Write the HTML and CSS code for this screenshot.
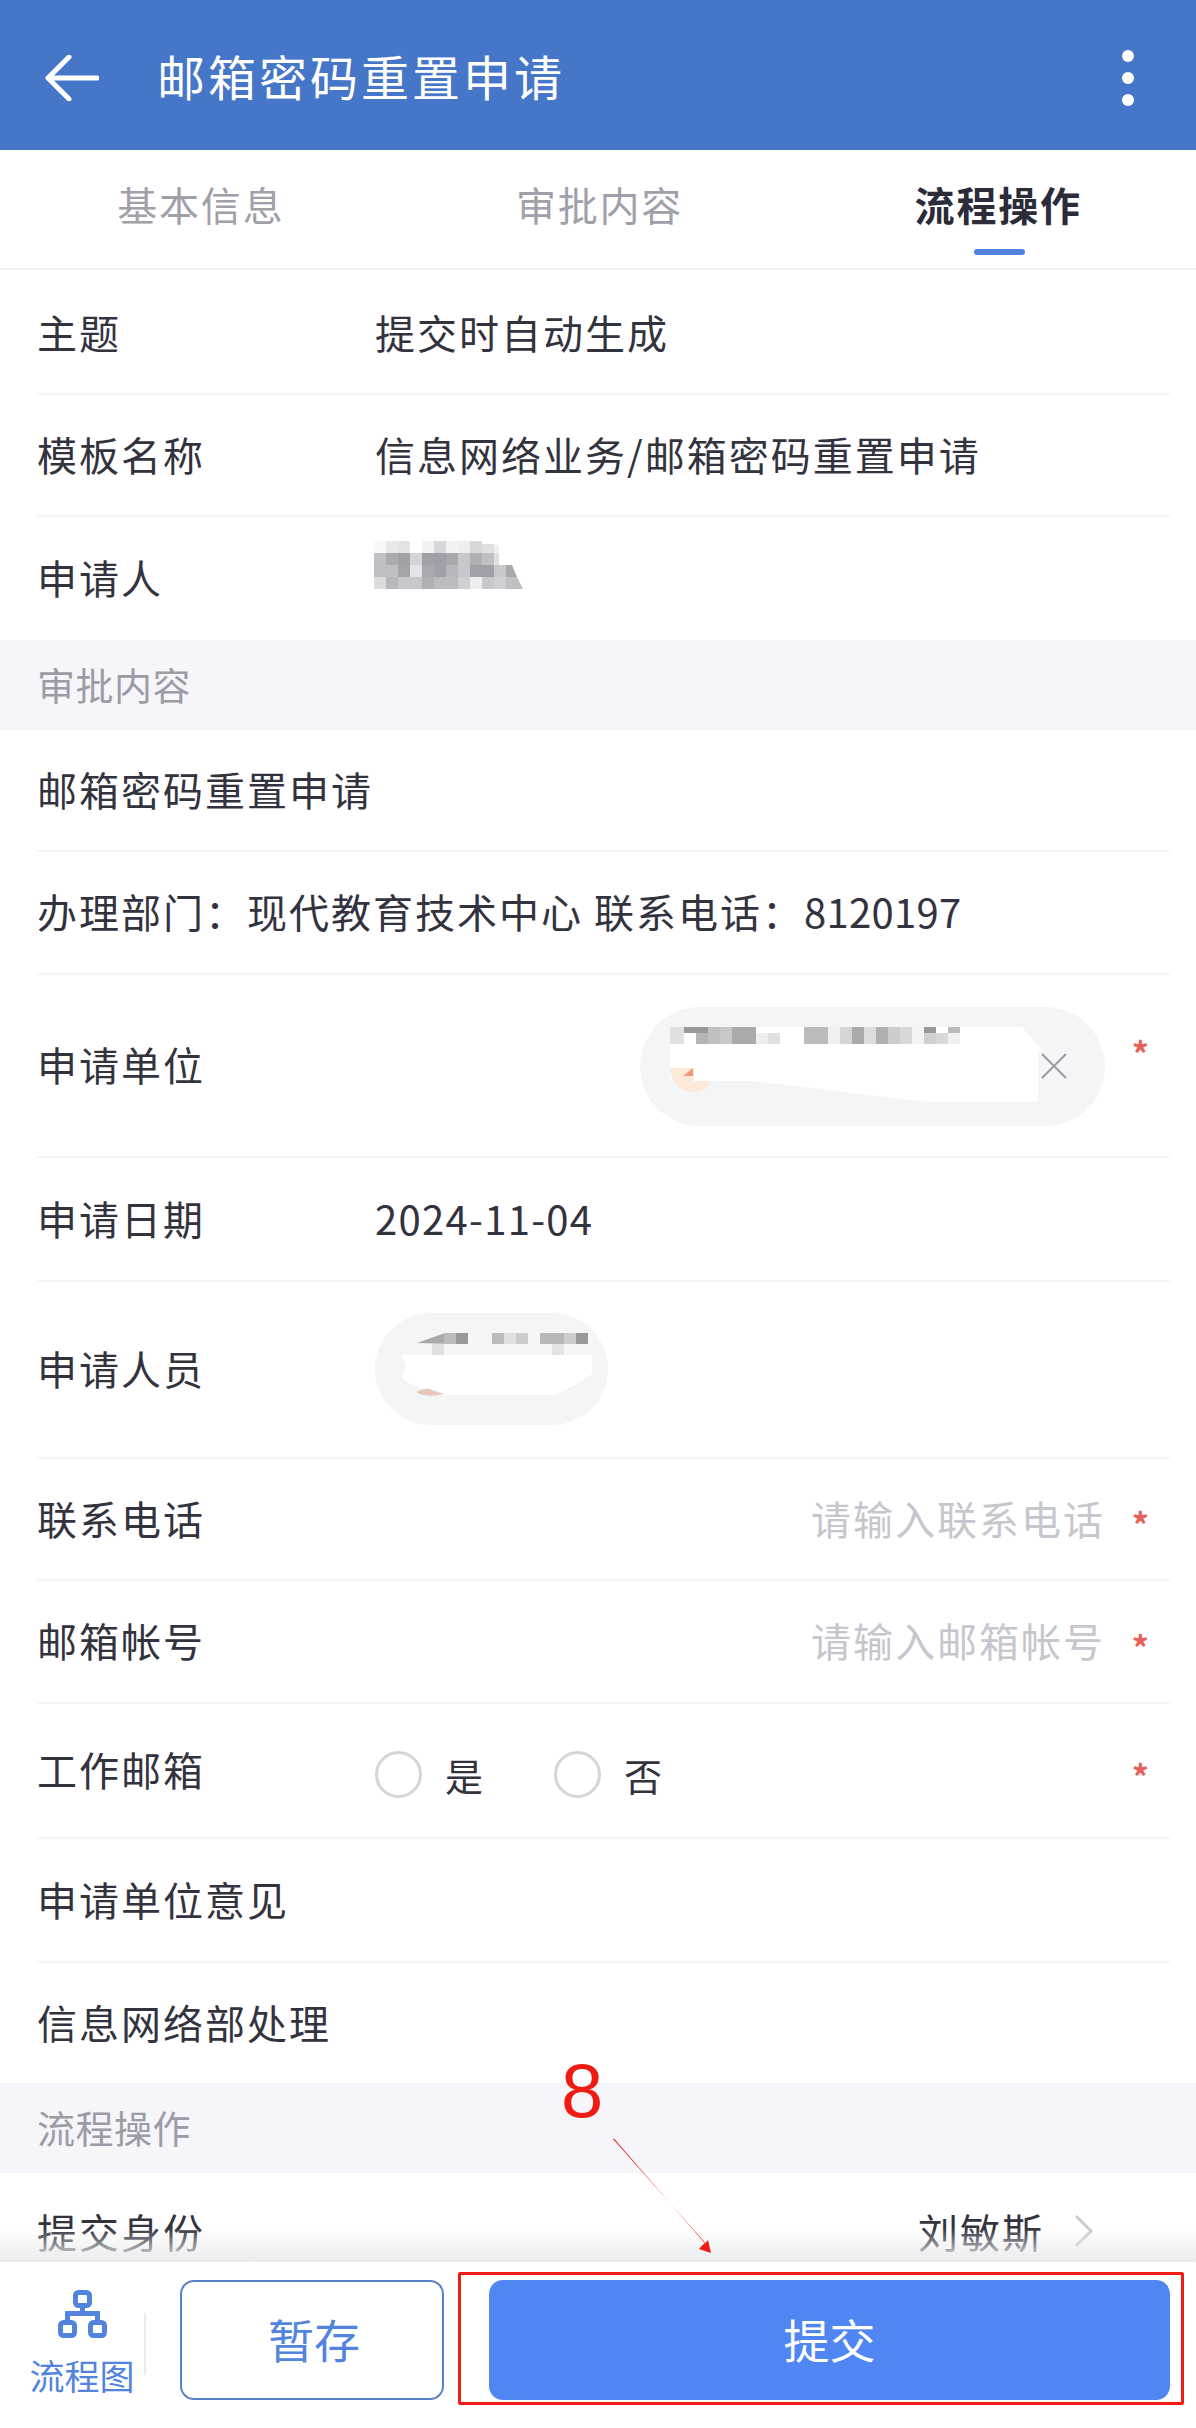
FILE: index.html
```html
<!DOCTYPE html>
<html lang="zh-CN">
<head>
<meta charset="utf-8">
<title>邮箱密码重置申请</title>
<link rel="stylesheet" href="styles.css">
</head>
<body>
<div class="app">
  <header class="topbar">
    <svg class="back" viewBox="0 0 54 46"><path d="M24 2 3 23l21 21M3 23h49" fill="none" stroke="#fff" stroke-width="5" stroke-linecap="round" stroke-linejoin="round"/></svg>
    <h1 class="title">邮箱密码重置申请</h1>
    <div class="dots"><i></i><i></i><i></i></div>
  </header>
  <nav class="tabs">
    <div class="tab">基本信息</div>
    <div class="tab">审批内容</div>
    <div class="tab active">流程操作</div>
  </nav>
  <main class="content">
    <div class="row h-first"><span class="label">主题</span><span class="value">提交时自动生成</span></div>
    <div class="row h-122"><span class="label">模板名称</span><span class="value">信息网络业务/邮箱密码重置申请</span></div>
    <div class="row h-123 last"><span class="label">申请人</span>
      <svg class="blur-name" viewBox="372 540 150 48">
        <g>
          <rect x="372" y="540" width="12" height="12" fill="#f8f8f8"/><rect x="384" y="540" width="12" height="12" fill="#e8e8e8"/><rect x="396" y="540" width="12" height="12" fill="#e4e4e4"/><rect x="420" y="540" width="12" height="12" fill="#f2f2f2"/><rect x="432" y="540" width="12" height="12" fill="#d8d8dc"/><rect x="444" y="540" width="12" height="12" fill="#f2f2f2"/><rect x="456" y="540" width="12" height="12" fill="#eeeeee"/><rect x="468" y="540" width="12" height="12" fill="#d8d8d8"/><rect x="480" y="543" width="12" height="9" fill="#e0e0e0"/><rect x="492" y="544" width="5" height="8" fill="#f0f0f0"/>
          <rect x="372" y="552" width="12" height="12" fill="#c0c0c4"/><rect x="384" y="552" width="12" height="12" fill="#acacb0"/><rect x="396" y="552" width="12" height="12" fill="#a0a0a8"/><rect x="408" y="552" width="12" height="12" fill="#d5d5d8"/><rect x="420" y="552" width="12" height="12" fill="#a0a0a8"/><rect x="432" y="552" width="12" height="12" fill="#a0a0a8"/><rect x="444" y="552" width="12" height="12" fill="#a8a8ac"/><rect x="456" y="552" width="12" height="12" fill="#c8c8cc"/><rect x="468" y="552" width="12" height="12" fill="#b0b0b4"/><rect x="480" y="552" width="12" height="12" fill="#c0c0c4"/><rect x="492" y="552" width="5" height="12" fill="#e0e0e0"/>
          <rect x="372" y="564" width="12" height="12" fill="#c0c0c4"/><rect x="384" y="564" width="12" height="12" fill="#c0c0c4"/><rect x="396" y="564" width="12" height="12" fill="#a4a4aa"/><rect x="408" y="564" width="12" height="12" fill="#e4e4e8"/><rect x="420" y="564" width="12" height="12" fill="#a8a8ae"/><rect x="432" y="564" width="12" height="12" fill="#a0a0a8"/><rect x="444" y="564" width="12" height="12" fill="#b8b8bc"/><rect x="456" y="564" width="12" height="12" fill="#c8c8cc"/><rect x="468" y="564" width="24" height="12" fill="#a0a0a8"/><rect x="492" y="564" width="12" height="12" fill="#c8c8cc"/><path d="M504 564h6l5 12h-11z" fill="#a8a8ac"/>
          <rect x="372" y="576" width="12" height="12" fill="#dcdcdc"/><rect x="384" y="576" width="12" height="12" fill="#b8b8bc"/><rect x="396" y="576" width="24" height="12" fill="#c8c8cc"/><rect x="420" y="576" width="12" height="12" fill="#b0b0b4"/><rect x="432" y="576" width="24" height="12" fill="#bcbcc0"/><rect x="456" y="576" width="12" height="12" fill="#d0d0d4"/><rect x="468" y="576" width="12" height="12" fill="#eeeeee"/><rect x="480" y="576" width="12" height="12" fill="#c8c8cc"/><rect x="492" y="576" width="12" height="12" fill="#d0d0d4"/><path d="M504 576h11l6 12h-17z" fill="#c0c0c4"/>
        </g>
      </svg>
    </div>
    <div class="section">审批内容</div>
    <div class="row h-122"><span class="label">邮箱密码重置申请</span></div>
    <div class="row h-123"><span class="label">办理部门：现代教育技术中心 联系电话：<span class="num">8120197</span></span></div>
    <div class="row h-183"><span class="label">申请单位</span>
      <div class="pill pill-unit">
        <svg class="pill-art" viewBox="640 1007 465 119">
          <path d="M670 1027H1022L1042 1050 1038 1054V1102H927L752 1081H670z" fill="#fff"/>
          <path d="M670 1068h24v13h18c-4 7-11 11-19 11-12 0-23-10-23-24z" fill="#fde9da"/>
          <path d="M683 1076l10-8v8z" fill="#ee9a78"/>
          <g>
            <rect x="670" y="1027" width="14" height="17" fill="#e0e0e0"/><rect x="684" y="1027" width="24" height="6" fill="#999"/><rect x="696" y="1033" width="12" height="11" fill="#b5b5b5"/><rect x="708" y="1027" width="12" height="17" fill="#c0c0c0"/><rect x="720" y="1027" width="12" height="17" fill="#c8c8c8"/><rect x="732" y="1027" width="24" height="17" fill="#aaa"/><rect x="756" y="1033" width="12" height="11" fill="#eee"/><rect x="768" y="1033" width="12" height="11" fill="#e0e0e0"/><rect x="804" y="1027" width="24" height="17" fill="#bbb"/><rect x="828" y="1027" width="12" height="17" fill="#f0f0f0"/><rect x="840" y="1027" width="12" height="17" fill="#d5d5d5"/><rect x="852" y="1027" width="12" height="17" fill="#aaa"/><rect x="864" y="1027" width="12" height="17" fill="#ddd"/><rect x="876" y="1027" width="12" height="17" fill="#b0b0b0"/><rect x="888" y="1027" width="12" height="17" fill="#ccc"/><rect x="900" y="1027" width="12" height="17" fill="#d8d8d8"/><rect x="912" y="1027" width="12" height="17" fill="#f4f4f4"/><rect x="924" y="1027" width="12" height="6" fill="#999"/><rect x="924" y="1033" width="12" height="11" fill="#d0d0d0"/><rect x="936" y="1033" width="12" height="11" fill="#d8d8d8"/><rect x="948" y="1027" width="12" height="6" fill="#bbb"/><rect x="948" y="1033" width="12" height="11" fill="#f0f0f0"/>
          </g>
          <path d="M1042 1054l24 24M1066 1054l-24 24" fill="none" stroke="#9a9aa2" stroke-width="2"/>
        </svg>
      </div>
      <span class="req req-top">*</span>
    </div>
    <div class="row h-124"><span class="label">申请日期</span><span class="value num-date">2024-11-04</span></div>
    <div class="row h-177"><span class="label">申请人员</span>
      <div class="pill pill-person">
        <svg class="pill-art" viewBox="375 1313 233 112">
          <path d="M402 1355H592V1374L575 1385 555 1395H440L412 1385 402 1378 406 1366z" fill="#fff"/>
          <path d="M417 1343l28-10h147v22H404z" fill="#f6f6f6"/>
          <g>
            <path d="M417 1343l28-10h4v11z" fill="#aaa"/><rect x="444" y="1333" width="12" height="11" fill="#bbb"/><rect x="456" y="1333" width="12" height="11" fill="#999"/><rect x="492" y="1333" width="12" height="11" fill="#bbb"/><rect x="504" y="1333" width="12" height="11" fill="#e0e0e0"/><rect x="516" y="1333" width="12" height="11" fill="#ccc"/><rect x="540" y="1333" width="24" height="11" fill="#b8b8b8"/><rect x="564" y="1333" width="12" height="11" fill="#ccc"/><rect x="576" y="1333" width="12" height="11" fill="#999"/>
            <rect x="432" y="1344" width="12" height="11" fill="#e0e0e0"/><rect x="552" y="1344" width="12" height="11" fill="#e4e4e4"/>
          </g>
          <path d="M416 1392c8-4 12-4 16-2l12 4c-8 2-20 3-28-2z" fill="#e6c8bc"/>
        </svg>
      </div>
    </div>
    <div class="row h-122"><span class="label">联系电话</span><span class="placeholder">请输入联系电话</span><span class="req">*</span></div>
    <div class="row h-123"><span class="label">邮箱帐号</span><span class="placeholder">请输入邮箱帐号</span><span class="req">*</span></div>
    <div class="row h-135"><span class="label">工作邮箱</span>
      <div class="radios">
        <span class="radio"></span><span class="radio-text">是</span>
        <span class="radio"></span><span class="radio-text">否</span>
      </div>
      <span class="req">*</span>
    </div>
    <div class="row h-124"><span class="label">申请单位意见</span></div>
    <div class="row h-120 last"><span class="label">信息网络部处理</span></div>
    <div class="section">流程操作</div>
    <div class="row h-118 last"><span class="label">提交身份</span><span class="picked">刘敏斯</span>
      <svg class="chevron" viewBox="0 0 20 34"><path d="M2 2l15 15L2 32" fill="none" stroke="#cdcdcd" stroke-width="3"/></svg>
    </div>
  </main>
  <footer class="footer">
    <div class="flow">
      <svg class="flow-icon" viewBox="0 0 49 48"><g fill="none" stroke="#5284de" stroke-width="5"><rect x="17.5" y="2.5" width="14" height="13" rx="3"/><rect x="2.5" y="32.5" width="14" height="13" rx="3"/><rect x="32.5" y="32.5" width="14" height="13" rx="3"/><path d="M24.500 15.500v8M9.500 32.500v-9h30v9"/></g></svg>
      <span class="flow-text">流程图</span>
    </div>
    <button class="btn ghost">暂存</button>
    <button class="btn solid">提交</button>
  </footer>
  <div class="mark-box"></div>
  <div class="mark-num">8</div>
  <svg class="mark-arrow" viewBox="610 2136 104 120"><path d="M613 2139l92 103.500-6 6.500 12 4-3-13-3 3.500-91-105z" fill="#f01c14"/></svg>
</div>
</body>
</html>
```
FILE: styles.css
```css
* { box-sizing: border-box; }
html, body { margin: 0; padding: 0; background: #fff; }
body { font-family: "Noto Sans CJK SC", "Noto Sans", sans-serif; color: #33333f; }
.app { position: relative; width: 1196px; height: 2428px; display: flex; flex-direction: column; overflow: hidden; }

.topbar { height: 150px; background: #4676c8; display: flex; align-items: center; padding: 6px 0 0 45px; flex: none; }
.back { width: 54px; height: 46px; }
.title { margin: -6px 0 0 58px; font-size: 48px; font-weight: 400; letter-spacing: 3px; line-height: 1; color: #fff; flex: 1; }
.dots { display: flex; flex-direction: column; gap: 10px; margin-right: 62px; }
.dots i { display: block; width: 12px; height: 12px; border-radius: 50%; background: #fff; }

.tabs { height: 120px; display: flex; flex: none; border-bottom: 2px solid #f2f2f4; }
.tab { flex: 1; text-align: center; font-size: 40px; letter-spacing: 1.8px; line-height: 109px; padding: 0 0 0 3px; color: #a0a0aa; position: relative; }
.tab.active { color: #2b2b3a; font-weight: 700; }
.tab.active::after { content: ""; position: absolute; left: 50%; bottom: 13px; width: 51px; height: 6px; margin-left: -23px; border-radius: 3px; background: #5082dc; }

.content { flex: 1; min-height: 0; overflow: hidden; }
.row { display: flex; align-items: center; margin: 0 26px 0 37px; padding-bottom: 3px; border-bottom: 2px solid #f5f5f6; font-size: 40px; letter-spacing: 2px; position: relative; }
.row.last { border-bottom: 0; }
.h-first { height: 125px; padding-top: 4px; }
.h-118 { height: 118px; }
.h-120 { height: 120px; }
.h-122 { height: 122px; }
.h-123 { height: 123px; }
.h-124 { height: 124px; }
.h-135 { height: 135px; }
.h-177 { height: 177px; }
.h-183 { height: 183px; }
.label { width: 338px; white-space: nowrap; flex: none; }
.value { white-space: nowrap; }
.num { letter-spacing: 0.3px; }
.num-date { letter-spacing: 1.3px; }
.blur-name { width: 150px; height: 48px; margin-top: -25px; margin-left: -1px; }

.section { height: 90px; background: #f5f5fa; padding-left: 37px; font-size: 38px; line-height: 88px; letter-spacing: 0.5px; color: #9c9ca6; }

.pill { position: relative; border-radius: 60px; background: #f4f5f6; overflow: hidden; flex: none; }
.pill-unit { width: 465px; height: 119px; margin: 4px 65px 0 auto; }
.pill-person { width: 233px; height: 112px; margin-top: 1px; }
.pill-art { display: block; width: 100%; height: 100%; }
.req { position: absolute; right: 21px; top: 50%; margin-top: -17px; color: #e8605a; font-size: 34px; line-height: 44px; font-weight: 700; letter-spacing: 0; }
.req-top { margin-top: -35px; }
.placeholder { margin-left: auto; margin-right: 65px; color: #c6c6ce; white-space: nowrap; }
.radios { display: flex; align-items: center; }
.radio { width: 47px; height: 47px; border: 3px solid #d6d6d6; border-radius: 50%; margin-top: 10px; }
.radio-text { margin: 10px 71px 0 23px; font-size: 38px; letter-spacing: 0; }
.picked { margin-left: auto; margin-right: 30px; white-space: nowrap; }
.chevron { width: 20px; height: 34px; margin-right: 76px; }

.footer { height: 166px; flex: none; display: flex; padding: 18px 26px 28px 0; background: #fff; position: relative; }
.footer::before { content: ""; position: absolute; left: 0; right: 0; top: -34px; height: 34px; background: linear-gradient(to bottom, rgba(235, 235, 238, 0), #ebebee); }
.flow { width: 180px; display: flex; flex-direction: column; align-items: center; position: relative; padding: 10px 0 0 0; margin-left: 0; }
.flow::after { content: ""; position: absolute; left: 144px; top: 33px; width: 2px; height: 62px; background: #ececee; }
.flow-icon { width: 49px; height: 48px; margin-left: -16px; }
.flow-text { font-size: 35px; line-height: 40px; margin: 17px 0 0 -16px; color: #5284de; white-space: nowrap; }
.btn { font-family: inherit; font-size: 46px; border-radius: 14px; height: 120px; padding: 0 0 5px; }
.ghost { width: 264px; background: #fff; border: 2px solid #5a82c8; color: #5284de; padding-left: 4px; }
.solid { width: 681px; margin-left: 45px; background: #4f86f2; border: 0; color: #fff; }

.mark-box { position: absolute; left: 458px; top: 2272px; width: 726px; height: 133px; border: 3px solid #f01c14; border-radius: 2px; }
.mark-num { position: absolute; left: 561px; top: 2047px; font-family: "Liberation Sans", sans-serif; font-size: 76px; line-height: 88px; color: #f01c14; }
.mark-arrow { position: absolute; left: 610px; top: 2136px; width: 104px; height: 120px; }
```
